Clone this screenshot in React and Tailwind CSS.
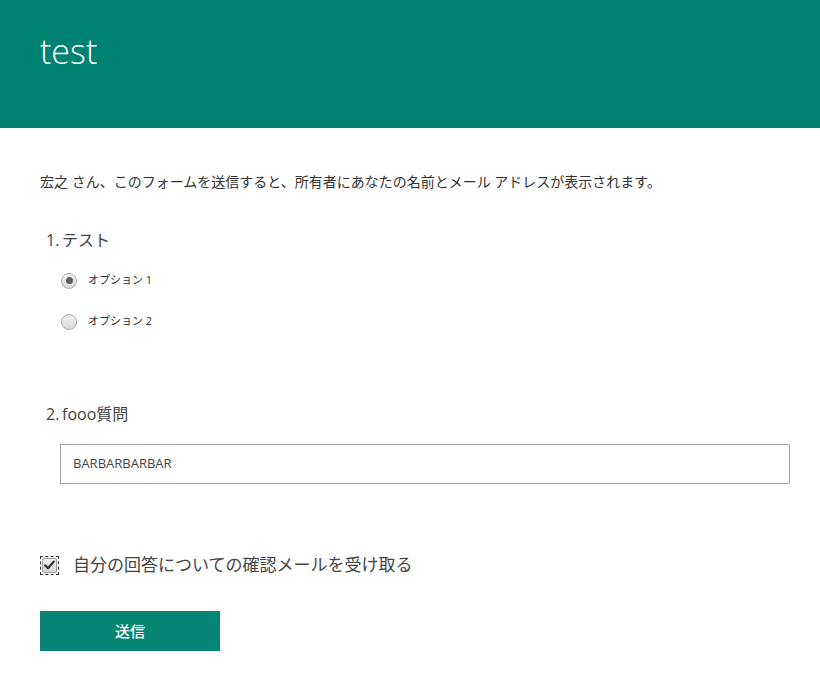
import React from "react";

const font = { fontFamily: '"Open Sans", "Noto Sans CJK JP", sans-serif' };

function Radio({ checked }) {
  return (
    <span className="relative flex h-[16px] w-[16px] items-center justify-center rounded-full border border-[#a9a9a9] bg-gradient-to-b from-[#f4f4f4] to-[#d9d9d9]">
      {checked && <span className="h-[7px] w-[7px] rounded-full bg-[#5e5e5e]" />}
    </span>
  );
}

export default function App() {
  return (
    <div className="min-h-[695px] w-full bg-white text-[#333333]" style={font}>
      <div className="h-[128px] bg-[#008272] pl-[40px] pt-[33px]">
        <h1 className="text-[34px] font-light leading-[36px] text-white">test</h1>
      </div>
      <div className="pl-[40px] pr-[30px]">
        <p className="mt-[44px] text-[14px] leading-[20px] text-[#333]">
          宏之 さん、このフォームを送信すると、所有者にあなたの名前とメール アドレスが表示されます。
        </p>

        <div className="mt-[36px] pl-[6px] text-[16px] leading-[24px] text-[#444]">1.&thinsp;テスト</div>
        <div className="mt-[8px] pl-[21px]">
          <div className="flex h-[41px] items-center gap-[11px]">
            <Radio checked />
            <span className="text-[11px] text-[#333]">オプション 1</span>
          </div>
          <div className="flex h-[41px] items-center gap-[11px]">
            <Radio />
            <span className="text-[11px] text-[#333]">オプション 2</span>
          </div>
        </div>

        <div className="mt-[60px] pl-[6px] text-[16px] leading-[24px] text-[#444]">2.&thinsp;fooo質問</div>
        <div className="ml-[20px] mt-[18px] flex h-[40px] w-[730px] items-center border border-[#a6a6a6] px-[12px] text-[13px] text-[#444]">
          BARBARBARBAR
        </div>

        <div className="mt-[69px] flex h-[24px] items-center gap-[14px]">
          <span className="flex h-[19px] w-[19px] items-center justify-center border border-dashed border-[#333]">
            <span className="flex h-[15px] w-[15px] items-center justify-center rounded-[2px] border border-[#9a9a9a] bg-gradient-to-b from-[#f2f2f2] to-[#d6d6d6]">
              <svg width="11" height="10" viewBox="0 0 11 10">
                <path d="M1.2 5.4 L4 8.2 L9.8 1.6" fill="none" stroke="#333" strokeWidth="2.2" strokeLinecap="round" strokeLinejoin="round" />
              </svg>
            </span>
          </span>
          <span className="text-[17px] text-[#444]">自分の回答についての確認メールを受け取る</span>
        </div>

        <button className="mt-[34px] flex h-[40px] w-[180px] items-center justify-center bg-[#078474] text-[15px] font-medium text-white">
          送信
        </button>
      </div>
    </div>
  );
}
